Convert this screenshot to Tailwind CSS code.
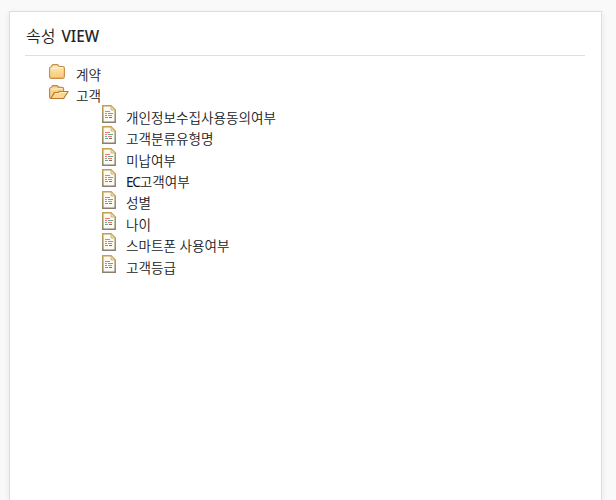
<!DOCTYPE html>
<html lang="ko">
<head>
<meta charset="utf-8">
<title>속성 VIEW</title>
<script src="https://cdn.jsdelivr.net/npm/@tailwindcss/browser@4"></script>
</head>
<body class="h-[500px] overflow-hidden bg-[#f9f9f9] pt-[11px] pl-[9px] font-['Noto_Sans','Noto_Sans_CJK_KR',sans-serif] text-[#212529]">
<svg class="absolute h-0 w-0" aria-hidden="true">
  <defs>
    <linearGradient id="gold" x1="0" y1="0" x2="0" y2="1"><stop offset="0" stop-color="#ffebba"/><stop offset="1" stop-color="#f7c873"/></linearGradient>
    <linearGradient id="edge" x1="0" y1="0" x2="0" y2="1"><stop offset="0" stop-color="#c2a04e"/><stop offset="1" stop-color="#85806f"/></linearGradient>
    <symbol id="closed" viewBox="0 0 20 16">
      <path d="M.6 4.2Q.6 3 2 3L3 1.4Q3.4.6 4.4.6H8Q9 .6 9.4 1.5L10 2.5H13.6Q15.4 2.5 15.4 4.2V12.6Q15.4 14.4 13.6 14.4H2.4Q.6 14.4.6 12.6Z" fill="url(#gold)" stroke="#c48b49" stroke-width="1.1"/>
      <path d="M1.5 4.4H8L10 3.5H14" fill="none" stroke="#fff5db"/>
    </symbol>
    <symbol id="open" viewBox="0 0 20 16">
      <path d="M.6 4Q.6 2.7 2 2.5L3 1.3Q3.4.6 4.4.6H7.6Q8.6.6 9 1.4L9.6 2.4H13Q14.6 2.4 14.6 4V13.4H2.4Q.6 13.4.6 12Z" fill="#f6d290" stroke="#c08240" stroke-width="1.1"/>
      <path d="M1.5 4.1H8L10 3.4H13.5" fill="none" stroke="#fff0d0"/>
      <path d="M1.8 13.5L5.4 7.6H9L10.3 6.5H19.2L14.6 13.5Z" fill="#fbd68f" stroke="#b97a35" stroke-width="1.2" stroke-linejoin="round"/>
      <path d="M6 8.6H9.4L10.8 7.5H17.4" fill="none" stroke="#ffebbd"/>
    </symbol>
    <symbol id="doc" viewBox="0 0 14 18">
      <path d="M.8.8H9L13.2 5V17.2H.8Z" fill="#fcfaf3" stroke="url(#edge)" stroke-width="1.5"/>
      <path d="M9 1V5H13Z" fill="#ede0b2" stroke="#c9ae68" stroke-width=".8"/>
      <path d="M3 6.5H8M3 8.5H5M6 10.5H10" stroke="#f2766f"/>
      <path d="M6 8.5H11M3 10.5H5M3 12.5H6" stroke="#5fae93"/>
      <path d="M7 12.5H10" stroke="#6f7278"/>
    </symbol>
  </defs>
</svg>
<main class="h-[489px] w-[593px] border border-b-0 border-[#dedede] bg-white pr-4 pl-[15px] shadow-[0_2px_6px_rgba(0,0,0,0.08)]">
  <h1 class="flex h-[44px] gap-[6px] border-b border-[#dedfe0] pt-[12px] pl-px text-[16px] leading-[24px]"><span class="font-[350]">속성</span><span class="text-[15.3px] font-medium">VIEW</span></h1>
  <ul class="pt-[8px] pl-[24px] text-[13.6px] leading-[21.4px] font-[350] text-[#15181b]">
    <li class="flex h-[21.4px]"><svg class="h-4 w-5 shrink-0"><use href="#closed"/></svg><span class="ml-[7px]">계약</span></li>
    <li>
      <div class="flex h-[21.4px]"><svg class="h-4 w-5 shrink-0"><use href="#open"/></svg><span class="ml-[7px]">고객</span></div>
      <ul class="pl-[53px]">
        <li class="flex h-[21.4px]"><svg class="-mt-[1.8px] h-[18px] w-3.5 shrink-0"><use href="#doc"/></svg><span class="ml-[10px]">개인정보수집사용동의여부</span></li>
        <li class="flex h-[21.4px]"><svg class="-mt-[1.8px] h-[18px] w-3.5 shrink-0"><use href="#doc"/></svg><span class="ml-[10px]">고객분류유형명</span></li>
        <li class="flex h-[21.4px]"><svg class="-mt-[1.8px] h-[18px] w-3.5 shrink-0"><use href="#doc"/></svg><span class="ml-[10px]">미납여부</span></li>
        <li class="flex h-[21.4px]"><svg class="-mt-[1.8px] h-[18px] w-3.5 shrink-0"><use href="#doc"/></svg><span class="ml-[10px]"><span class="font-normal tracking-[-1.2px]">EC</span>고객여부</span></li>
        <li class="flex h-[21.4px]"><svg class="-mt-[1.8px] h-[18px] w-3.5 shrink-0"><use href="#doc"/></svg><span class="ml-[10px]">성별</span></li>
        <li class="flex h-[21.4px]"><svg class="-mt-[1.8px] h-[18px] w-3.5 shrink-0"><use href="#doc"/></svg><span class="ml-[10px]">나이</span></li>
        <li class="flex h-[21.4px]"><svg class="-mt-[1.8px] h-[18px] w-3.5 shrink-0"><use href="#doc"/></svg><span class="ml-[10px]">스마트폰 사용여부</span></li>
        <li class="flex h-[21.4px]"><svg class="-mt-[1.8px] h-[18px] w-3.5 shrink-0"><use href="#doc"/></svg><span class="ml-[10px]">고객등급</span></li>
      </ul>
    </li>
  </ul>
</main>
</body>
</html>
